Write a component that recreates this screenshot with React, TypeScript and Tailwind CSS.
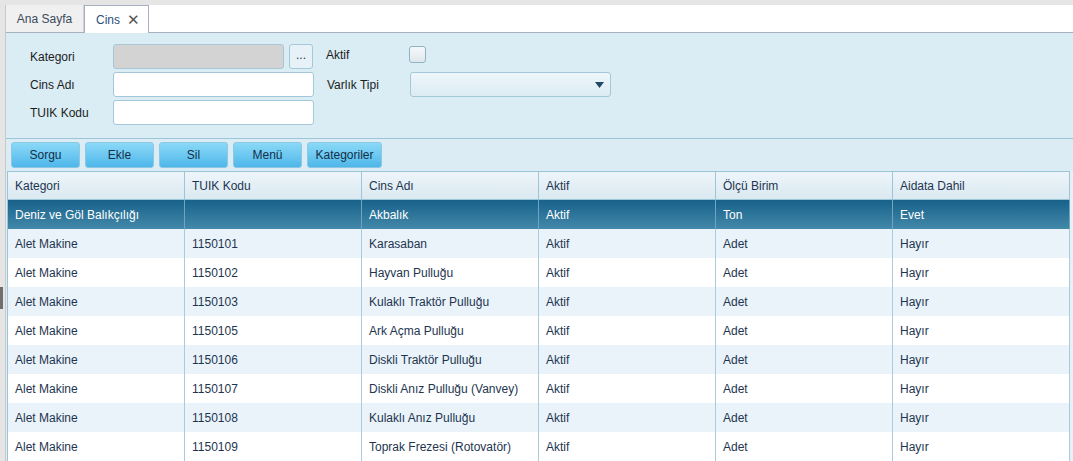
import React from "react";

type Row = {
  kategori: string;
  tuik: string;
  cins: string;
  aktif: string;
  birim: string;
  aidata: string;
};

const rows: Row[] = [
  { kategori: "Deniz ve Göl Balıkçılığı", tuik: "", cins: "Akbalık", aktif: "Aktif", birim: "Ton", aidata: "Evet" },
  { kategori: "Alet Makine", tuik: "1150101", cins: "Karasaban", aktif: "Aktif", birim: "Adet", aidata: "Hayır" },
  { kategori: "Alet Makine", tuik: "1150102", cins: "Hayvan Pulluğu", aktif: "Aktif", birim: "Adet", aidata: "Hayır" },
  { kategori: "Alet Makine", tuik: "1150103", cins: "Kulaklı Traktör Pulluğu", aktif: "Aktif", birim: "Adet", aidata: "Hayır" },
  { kategori: "Alet Makine", tuik: "1150105", cins: "Ark Açma Pulluğu", aktif: "Aktif", birim: "Adet", aidata: "Hayır" },
  { kategori: "Alet Makine", tuik: "1150106", cins: "Diskli Traktör Pulluğu", aktif: "Aktif", birim: "Adet", aidata: "Hayır" },
  { kategori: "Alet Makine", tuik: "1150107", cins: "Diskli Anız Pulluğu (Vanvey)", aktif: "Aktif", birim: "Adet", aidata: "Hayır" },
  { kategori: "Alet Makine", tuik: "1150108", cins: "Kulaklı Anız Pulluğu", aktif: "Aktif", birim: "Adet", aidata: "Hayır" },
  { kategori: "Alet Makine", tuik: "1150109", cins: "Toprak Frezesi (Rotovatör)", aktif: "Aktif", birim: "Adet", aidata: "Hayır" },
];

const headers = ["Kategori", "TUIK Kodu", "Cins Adı", "Aktif", "Ölçü Birim", "Aidata Dahil"];

const inputCls = "h-[25px] rounded-[3px] border border-[#a4c8da] bg-white";

function ToolButton({ label, w }: { label: string; w: string }) {
  return (
    <button
      className={`${w} h-[26px] rounded-[3px] border border-[#8cc8e4] bg-gradient-to-b from-[#8ad9f7] to-[#4db7ea] text-[12px] text-[#12304a]`}
    >
      {label}
    </button>
  );
}

export default function App() {
  return (
    <div
      className="w-[1073px] h-[461px] overflow-hidden bg-[#e5e5e5] pt-[5px] flex text-[12px]"
      style={{ fontFamily: '"Liberation Sans", Arial, sans-serif' }}
    >
      {/* left strip */}
      <div className="w-[6px] shrink-0 relative border-r border-[#c9c9c9]">
        <div className="absolute left-0 top-[282px] w-[3px] h-[22px] bg-[#6e6e6e]" />
      </div>

      <div className="flex-1 flex flex-col bg-white min-h-0">
        {/* tabs */}
        <div className="h-[28px] shrink-0 flex items-end border-b border-[#a7b0c0] bg-white">
          <div className="w-[78px] h-[27px] flex items-center justify-center bg-[#f0f0f0] border-r border-[#d0d0d0] text-[#3b4a5c]">
            Ana Sayfa
          </div>
          <div className="w-[65px] h-[28px] -mb-px flex items-center gap-[7px] pl-[11px] bg-white border-t border-x border-[#a7b0c0] text-[#2c4f7c]">
            <span>Cins</span>
            <span className="text-[#555] text-[15px] leading-none">✕</span>
          </div>
        </div>

        {/* form */}
        <div className="h-[106px] shrink-0 bg-[#daecf4] border-b border-[#9cc5d8] pl-[24px] pt-[11px] flex flex-col gap-[3px] text-[#1c1c1c]">
          <div className="flex items-center h-[25px]">
            <span className="w-[83px]">Kategori</span>
            <div className="w-[171px] h-[25px] rounded-[3px] border border-[#a9c6d4] bg-[#d3d3d3]" />
            <button className="ml-[5px] w-[24px] h-[25px] rounded-[3px] border border-[#a4c8da] bg-[#e6f2f8] text-[#2a3a4a] leading-none pb-[4px]">
              ...
            </button>
            <span className="ml-[13px] w-[83px] -mt-[4px]">Aktif</span>
            <div className="w-[17px] h-[17px] -mt-[4px] rounded-[3px] border border-[#8fb3c6] bg-gradient-to-b from-[#f6f9fb] to-[#dfe7ec]" />
          </div>
          <div className="flex items-center h-[25px]">
            <span className="w-[83px]">Cins Adı</span>
            <div className={`${inputCls} w-[201px]`} />
            <span className="ml-[13px] w-[83px]">Varlık Tipi</span>
            <div className="w-[201px] h-[25px] rounded-[3px] border border-[#a4c8da] bg-gradient-to-b from-[#eef6fb] to-[#dcebf3] flex items-center justify-end pr-[6px]">
              <svg width="9" height="6" viewBox="0 0 9 6">
                <path d="M0 0 H9 L4.5 6 Z" fill="#1f4a63" />
              </svg>
            </div>
          </div>
          <div className="flex items-center h-[25px]">
            <span className="w-[83px]">TUIK Kodu</span>
            <div className={`${inputCls} w-[201px]`} />
          </div>
        </div>

        {/* toolbar */}
        <div className="h-[32px] shrink-0 bg-[#dcecf4] flex items-center gap-[5px] pl-[5px]">
          <ToolButton label="Sorgu" w="w-[69px]" />
          <ToolButton label="Ekle" w="w-[69px]" />
          <ToolButton label="Sil" w="w-[69px]" />
          <ToolButton label="Menü" w="w-[69px]" />
          <ToolButton label="Kategoriler" w="w-[75px]" />
        </div>

        {/* table */}
        <div className="flex-1 flex bg-[#e6f1f7] min-h-0">
          <div className="w-[1px] bg-[#dcecf4]" />
          <div className="w-[1063px] border-l border-[#9cc5d8] bg-[#eaf3fa]">
            <div className="grid grid-cols-[177px_177px_177px_177px_177px_177px] h-[29px] border-y border-[#9cc5d8] bg-gradient-to-b from-[#edf5fa] to-[#dbe9f1] text-[#1e3550]">
              {headers.map((h) => (
                <div key={h} className="flex items-center pl-[7px] border-r border-[#9cc5d8]">
                  {h}
                </div>
              ))}
            </div>
            {rows.map((r, idx) => {
              const sel = idx === 0;
              const bg = sel
                ? "bg-gradient-to-b from-[#17618a] to-[#4289aa] text-white"
                : idx % 2 === 1
                ? "bg-[#eaf3fa] text-[#1e3550]"
                : "bg-white text-[#1e3550]";
              return (
                <div key={idx} className={`grid grid-cols-[177px_177px_177px_177px_177px_177px] h-[29px] ${bg}`}>
                  {[r.kategori, r.tuik, r.cins, r.aktif, r.birim, r.aidata].map((c, i) => (
                    <div
                      key={i}
                      className={`flex items-center pl-[7px] border-r ${sel ? "border-[#6ea6c2]" : "border-[#a9cbdb]"}`}
                    >
                      {c}
                    </div>
                  ))}
                </div>
              );
            })}
          </div>
        </div>
      </div>
    </div>
  );
}
